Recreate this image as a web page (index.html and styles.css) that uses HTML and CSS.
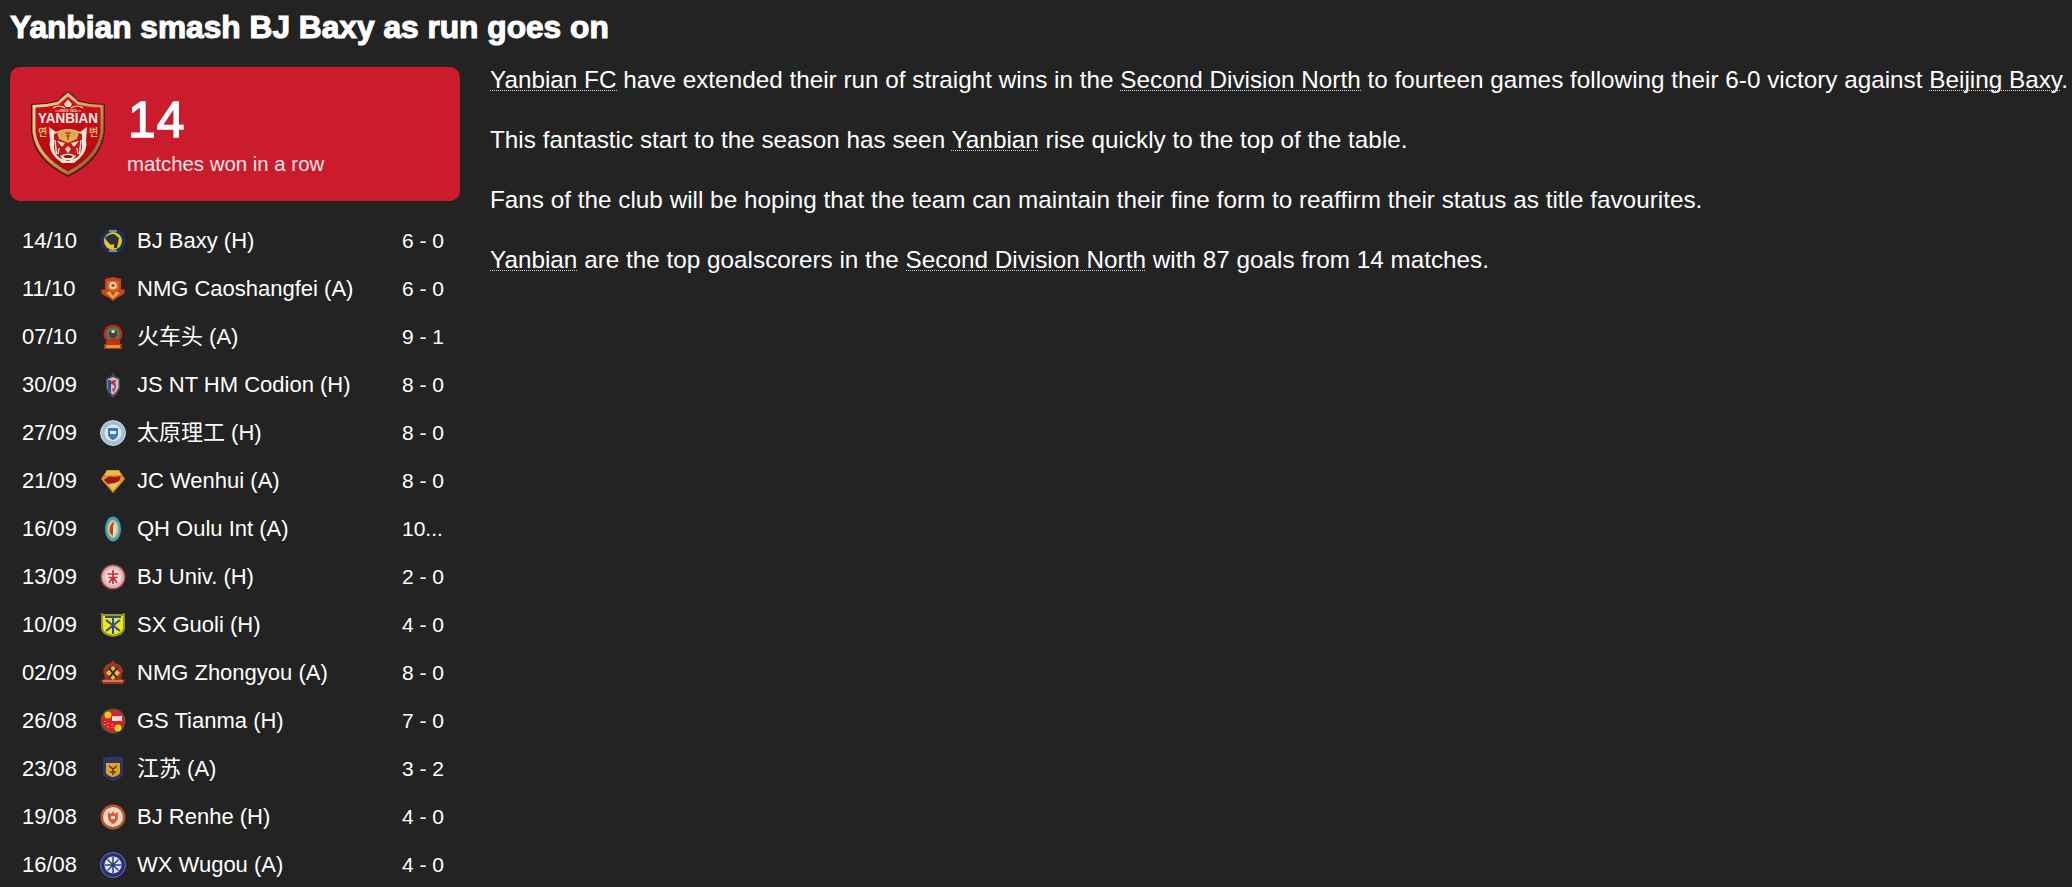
FILE: index.html
```html
<!DOCTYPE html>
<html lang="en">
<head>
<meta charset="utf-8">
<title>Yanbian smash BJ Baxy as run goes on</title>
<link rel="stylesheet" href="styles.css">
</head>
<body>
<h1 class="headline">Yanbian smash BJ Baxy as run goes on</h1>
<div class="layout">
  <aside class="side">
    <div class="streak">
      <svg class="crest-big" viewBox="0 0 76 88">
        <defs>
          <linearGradient id="gold" x1="0" y1="0" x2="1" y2="1">
            <stop offset="0" stop-color="#f0e0b0"/><stop offset=".5" stop-color="#c9a95c"/><stop offset="1" stop-color="#6e4a1e"/>
          </linearGradient>
          <linearGradient id="redfield" x1="0" y1="0" x2="0" y2="1">
            <stop offset="0" stop-color="#d01018"/><stop offset="1" stop-color="#b00810"/>
          </linearGradient>
        </defs>
        <path d="M38 1 L50 11 Q62 14 75 14 L75 42 Q72 71 38 87 Q4 71 1 42 L1 14 Q14 14 26 11 Z" fill="#6e1212"/>
        <path d="M38 2.500 L49 12 Q61 15 73.500 15 L73.500 42 Q70 69 38 85 Q6 69 2.500 42 L2.500 15 Q15 15 27 12 Z" fill="url(#gold)"/>
        <path d="M38 6.500 L47.500 14.500 Q60 17.500 70.500 17.500 L70.500 42 Q67 66 38 81.500 Q9 66 5.500 42 L5.500 17.500 Q16 17.500 28.500 14.500 Z" fill="url(#redfield)"/>
        <path d="M34 14 L38 9.500 L42 14 L40.500 17 L35.500 17 Z" fill="#efdcb8"/>
        <path d="M23 18 Q29 14 35 18 M41 18 Q47 14 53 18" stroke="#efdcb8" stroke-width="1.200" fill="none"/>
        <path d="M25 21 H30 M46 21 H51" stroke="#e8cf9a" stroke-width=".8"/>
        <text class="crest-since" x="38" y="22" text-anchor="middle">SINCE 1955</text>
        <text class="crest-name" x="38" y="33" text-anchor="middle" textLength="60" lengthAdjust="spacingAndGlyphs">YANBIAN</text>
        <text class="crest-kr" x="12.500" y="46" text-anchor="middle">연</text>
        <text class="crest-kr" x="63.500" y="46" text-anchor="middle">변</text>
        <path d="M19 37 L26 42 Q38 36 50 42 L57 37 L56 50 Q58 60 50 68 L44 73 H32 L26 68 Q18 60 20 50 Z" fill="#f2e6d8"/>
        <path d="M24 44 Q38 38 52 44 L52 56 Q52 64 46 68 L38 71 L30 68 Q24 64 24 56 Z" fill="#c4161a"/>
        <path d="M27 42 Q38 37 49 42 L47 49 L38 53 L29 49 Z" fill="#dcae4c"/>
        <path d="M35 43 H41 M36 46 H40 M38 43 V50" stroke="#a92015" stroke-width="1"/>
        <path d="M27 51 L35 53 L32 57 Z M49 51 L41 53 L44 57 Z" fill="#f7e9c8"/>
        <path d="M25 50 L26.500 64 M51 50 L49.500 64 M29 58 L28 64 M47 58 L48 64" stroke="#f2e6d8" stroke-width="1.400"/>
        <path d="M35 59 L38 56 L41 59 L38 63 Z" fill="#f2e2c8"/>
        <path d="M30 66 Q38 61 46 66 L42 70 H34 Z" fill="#f7ecdb"/>
        <path d="M33 66 Q38 64 43 66 L41 68 H35 Z" fill="#8e1014"/>
      </svg>
      <div class="streak-text">
        <div class="streak-num">14</div>
        <div class="streak-label">matches won in a row</div>
      </div>
    </div>
    <ul class="results">
      <li class="result"><span class="date">14/10</span>
        <svg class="badge" viewBox="0 0 26 26"><circle cx="13" cy="13" r="12.500" fill="#1b2f66"/><circle cx="13" cy="13" r="9" fill="#e9c915"/><path d="M5 10 Q8 6 14 6 L19 10 L18 15 L17 20 L14 20 L14 16 Q10 18 9 15 L7 13 Z" fill="#2a3138"/><path d="M9 3 H17 M9 23 H17" stroke="#dfe6f0" stroke-width="1"/></svg>
        <span class="club">BJ Baxy (H)</span><span class="score">6 - 0</span></li>
      <li class="result"><span class="date">11/10</span>
        <svg class="badge" viewBox="0 0 26 26"><path d="M5 3 L13 1 L21 3 L21 13 L25 14 L24 18 L17 22 L13 25 L9 22 L2 18 L1 14 L5 13 Z" fill="#c9421c"/><path d="M7 5 H19 V13 L13 16 L7 13 Z" fill="#d9622a"/><circle cx="13" cy="9.500" r="3.800" fill="#f4d9a6"/><circle cx="13" cy="9.500" r="1.600" fill="#c4301c"/><path d="M6 17 L10 15 L13 20 L16 15 L20 17 L13 23 Z" fill="#e8a23a"/></svg>
        <span class="club">NMG Caoshangfei (A)</span><span class="score">6 - 0</span></li>
      <li class="result"><span class="date">07/10</span>
        <svg class="badge" viewBox="0 0 26 26"><circle cx="13" cy="10" r="9.500" fill="#d4201c"/><circle cx="13" cy="10" r="6.800" fill="#1f9a6a"/><circle cx="13" cy="10" r="4.300" fill="#5a3a34"/><path d="M11 7 Q13 5 15 7 L14 9 H12 Z" fill="#ece3d2"/><path d="M10 14 H16 V17 H20 V20 H22 V25 H4 V20 H6 V17 H10 Z" fill="#b9341a"/><path d="M6 21 H20 V24 H6 Z" fill="#e09a2a"/></svg>
        <span class="club">火车头 (A)</span><span class="score">9 - 1</span></li>
      <li class="result"><span class="date">30/09</span>
        <svg class="badge" viewBox="0 0 26 26"><path d="M13 0 L15 4 L20 6 V17 Q18 22 13 26 Q8 22 6 17 V6 L11 4 Z" fill="#4f4548"/><path d="M13 5 L18.500 7.500 V16 Q16 20.500 13 23 Q10 20.500 7.500 16 V7.500 Z" fill="#b9c8de"/><path d="M8 8 V16 Q9 19 11 21 L11 8 Z" fill="#2d4f92"/><path d="M16 8 Q10 8 11 12 Q16 13 14 17 L12 16 L13 21 Q18 15 15 11 Q13 10 16 10 Z" fill="#c8323a"/></svg>
        <span class="club">JS NT HM Codion (H)</span><span class="score">8 - 0</span></li>
      <li class="result"><span class="date">27/09</span>
        <svg class="badge" viewBox="0 0 26 26"><circle cx="13" cy="13" r="12.500" fill="#a3bdd4"/><circle cx="13" cy="13" r="12.500" fill="none" stroke="#dfe8f0" stroke-width=".8"/><circle cx="13" cy="13" r="8.500" fill="#dbe6ef"/><path d="M8 8 H18 V15 Q16.500 19 13 20 Q9.500 19 8 15 Z" fill="#3f7cae"/><path d="M10 11 H16 V14 H10 Z" fill="#e8eff5"/></svg>
        <span class="club">太原理工 (H)</span><span class="score">8 - 0</span></li>
      <li class="result"><span class="date">21/09</span>
        <svg class="badge" viewBox="0 0 26 26"><path d="M7 2 H19 L25 11 L13 25 L1 11 Z" fill="#d8962a"/><path d="M7 3 H19 L21 7 H5 Z" fill="#e8c04a"/><path d="M6 14 L20 14 L13 22 Z" fill="#e9c468"/><path d="M4 12 Q8 7 14 9 L21 8 L19 13 L15 15 L8 16 Z" fill="#a81218"/></svg>
        <span class="club">JC Wenhui (A)</span><span class="score">8 - 0</span></li>
      <li class="result"><span class="date">16/09</span>
        <svg class="badge" viewBox="0 0 26 26"><ellipse cx="13" cy="13" rx="8" ry="12.500" fill="#3fa3b5"/><ellipse cx="13" cy="13" rx="5.500" ry="9" fill="#d8c68e"/><path d="M14 5 Q8 11 10 17 L13 20 L13 14 Q13 10 14 5 Z" fill="#c93a22"/><path d="M14 8 Q17 12 15 17 L13 20 L13 13 Z" fill="#f4efe6"/></svg>
        <span class="club">QH Oulu Int (A)</span><span class="score">10...</span></li>
      <li class="result"><span class="date">13/09</span>
        <svg class="badge" viewBox="0 0 26 26"><circle cx="13" cy="13" r="12.500" fill="#b84a52"/><circle cx="13" cy="13" r="11" fill="#e5b5b5"/><circle cx="13" cy="13" r="8" fill="#f3e2de"/><path d="M7.500 10 H18.500 M8.500 13.500 H17.500 M13 6 V20 M9 19 L13 13 L17 19" stroke="#c42d35" stroke-width="1.700" fill="none"/></svg>
        <span class="club">BJ Univ. (H)</span><span class="score">2 - 0</span></li>
      <li class="result"><span class="date">10/09</span>
        <svg class="badge" viewBox="0 0 26 26"><path d="M1 1 L4 2 H22 L25 1 V16 Q25 23 13 25 Q1 23 1 16 Z" fill="#8d9a2c"/><path d="M3 4 H23 V16 Q23 21 13 23 Q3 21 3 16 Z" fill="#f3e41e"/><path d="M5 5 H21 M13 5 V22 M6 19 L20 8 M6 8 L20 19" stroke="#2a4d92" stroke-width="2"/></svg>
        <span class="club">SX Guoli (H)</span><span class="score">4 - 0</span></li>
      <li class="result"><span class="date">02/09</span>
        <svg class="badge" viewBox="0 0 26 26"><path d="M13 0 L15 3 L20 5 L23 10 L21 19 L25 20 L23 24 H3 L1 20 L5 19 L3 10 L6 5 L11 3 Z" fill="#9c3526"/><path d="M13 6 L20 13 L13 20 L6 13 Z" fill="#e6c028"/><path d="M9 8 L17 18 M17 8 L9 18" stroke="#2a2018" stroke-width="2"/><path d="M3 21 H23" stroke="#cf7a5a" stroke-width="2"/></svg>
        <span class="club">NMG Zhongyou (A)</span><span class="score">8 - 0</span></li>
      <li class="result"><span class="date">26/08</span>
        <svg class="badge" viewBox="0 0 26 26"><circle cx="13" cy="13" r="12.500" fill="#5f5a28"/><circle cx="13" cy="13" r="11" fill="#d8212c"/><circle cx="8" cy="7" r="3.500" fill="#f2c91f"/><circle cx="18" cy="20" r="3.500" fill="#f2c91f"/><path d="M12 8 H22 V13 H12 Z" fill="#f3ddd8"/><path d="M5 13 V18 M8 15 V20 M12 16 V20" stroke="#f3ddd8" stroke-width="1" stroke-dasharray="1 2"/></svg>
        <span class="club">GS Tianma (H)</span><span class="score">7 - 0</span></li>
      <li class="result"><span class="date">23/08</span>
        <svg class="badge" viewBox="0 0 26 26"><path d="M3 2 Q13 -1 23 2 V18 Q22 22 13 25 Q4 22 3 18 Z" fill="#2f3566"/><path d="M6 7 H20 V17 Q18 20 13 21 Q8 20 6 17 Z" fill="#e0a424"/><path d="M9 10 L13 13 L17 10 M10 16 H16 M13 13 V19" stroke="#5a3a18" stroke-width="1.500" fill="none"/></svg>
        <span class="club">江苏 (A)</span><span class="score">3 - 2</span></li>
      <li class="result"><span class="date">19/08</span>
        <svg class="badge" viewBox="0 0 26 26"><circle cx="13" cy="13" r="12.500" fill="#bd5226"/><circle cx="13" cy="13" r="10" fill="#edd6c6"/><path d="M8 8 L11 10 L13 7 L15 10 L18 8 V14 Q17 18 13 20 Q9 18 8 14 Z" fill="#d95b35"/><path d="M11 12 H15 V15 H11 Z" fill="#f5e4d6"/></svg>
        <span class="club">BJ Renhe (H)</span><span class="score">4 - 0</span></li>
      <li class="result"><span class="date">16/08</span>
        <svg class="badge" viewBox="0 0 26 26"><circle cx="13" cy="13" r="12.500" fill="#232f80"/><circle cx="13" cy="13" r="12.500" fill="none" stroke="#8089b8" stroke-width=".8"/><circle cx="13" cy="13" r="8.500" fill="#e3e7f3"/><path d="M13 5 V21 M5 13 H21 M7.500 7.500 L18.500 18.500 M18.500 7.500 L7.500 18.500" stroke="#2b3f92" stroke-width="1.500"/></svg>
        <span class="club">WX Wugou (A)</span><span class="score">4 - 0</span></li>
    </ul>
  </aside>
  <main class="story">
    <p><span class="link">Yanbian FC</span> have extended their run of straight wins in the <span class="link">Second Division North</span> to fourteen games following their 6-0 victory against <span class="link">Beijing Baxy</span>.</p>
    <p>This fantastic start to the season has seen <span class="link">Yanbian</span> rise quickly to the top of the table.</p>
    <p>Fans of the club will be hoping that the team can maintain their fine form to reaffirm their status as title favourites.</p>
    <p><span class="link">Yanbian</span> are the top goalscorers in the <span class="link">Second Division North</span> with 87 goals from 14 matches.</p>
  </main>
</div>
</body>
</html>
```

FILE: styles.css
```css
* { box-sizing: border-box; }
html, body { height: 100%; }
body {
  margin: 0;
  padding: 9px 0 0 10px;
  background: #232323;
  color: #fff;
  font-family: "Liberation Sans", Arial, "Noto Sans CJK SC", sans-serif;
  overflow: hidden;
}
.headline {
  margin: 0;
  font-size: 31.700px;
  line-height: 36px;
  font-weight: 700;
  -webkit-text-stroke: 1.100px #fff;
}
.layout {
  display: flex;
  gap: 30px;
  margin-top: 22px;
}
.side { width: 450px; flex: none; }
.streak {
  display: flex;
  align-items: center;
  gap: 21px;
  height: 134px;
  padding-left: 20px;
  background: #cb1c2e;
  border-radius: 10px;
}
.crest-big { width: 76px; height: 88px; flex: none; }
.crest-name { font: 700 15px "Liberation Sans", sans-serif; fill: #f6efe6; }
.crest-since { font: 700 3px "Liberation Sans", sans-serif; fill: #f0e2c4; }
.crest-kr { font: 700 10px "Noto Sans CJK KR", sans-serif; fill: #e8b86a; }
.streak-num {
  margin-left: 1px;
  font-size: 50px;
  line-height: 56px;
  font-weight: 400;
  letter-spacing: 1px;
  -webkit-text-stroke: 1.300px #fff;
}
.streak-label { font-size: 20.400px; line-height: 24px; margin-top: 4px; color: #f8e6e8; }
.results { list-style: none; margin: 16px 0 0; padding: 0; }
.result {
  display: flex;
  align-items: center;
  height: 48px;
  padding-left: 12px;
  font-size: 22px;
  line-height: 26px;
}
.date { width: 78px; flex: none; }
.badge { width: 26px; height: 26px; flex: none; margin-right: 11px; }
.club { width: 265px; flex: none; }
.score { width: 46px; flex: none; font-size: 21px; white-space: nowrap; }
.story { flex: 1; min-width: 0; margin-top: -1px; font-size: 24.300px; }
.story p { margin: 0 0 32px; line-height: 28px; white-space: nowrap; }
.link {
  background-image: repeating-linear-gradient(to right, #d0d0d0 0 1px, transparent 1px 2px);
  background-size: 100% 1px;
  background-position: 0 24px;
  background-repeat: no-repeat;
}
```
